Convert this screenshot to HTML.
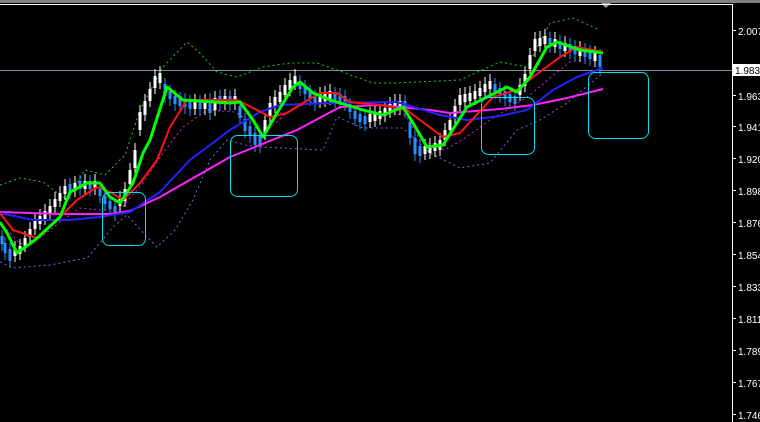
<!DOCTYPE html>
<html><head><meta charset="utf-8"><style>
html,body{margin:0;padding:0;background:#000;width:760px;height:422px;overflow:hidden}
svg{display:block}
text{font-family:"Liberation Sans",sans-serif;font-size:10px;fill:#fff}
</style></head><body>
<svg width="760" height="422" viewBox="0 0 760 422" xmlns="http://www.w3.org/2000/svg" xmlns:xlink="http://www.w3.org/1999/xlink">
<defs>
<path id="wb" d="M15 248v8M20 246v8M25 238v8M30 229v8M35 221v8M40 216v8M45 211v8M50 206v8M55 199v8M60 193v8M65 186v8M75 183v8M85 181v8M95 181v8M120 198v8M125 189v12M130 170v14M135 150v18M140 112v18M145 101v14M150 89v12M155 76v12M160 73v10M195 101v8M205 101v8M215 98v12M225 96v8M235 96v8M265 120v14M270 103v14M275 97v10M280 92v10M285 85v10M290 80v10M295 76v8M320 94v8M325 93v8M330 91v8M370 114v8M375 113v8M380 111v8M385 108v8M390 104v8M395 101v8M400 101v8M425 146v8M430 145v8M435 143v8M440 140v10M445 130v10M450 120v10M455 106v12M460 95v10M465 94v8M470 93v8M475 91v8M480 88v8M485 84v8M490 81v8M520 85v10M525 74v12M530 55v14M535 39v12M540 38v8M545 36v8M555 39v8M565 43v8M580 48v8M595 53v8"/>
<path id="bb" d="M2 236v8M5 243v10M10 249v12M70 184v8M80 181v8M90 181v8M100 188v8M105 196v8M110 201v8M115 206v8M165 84v12M170 91v8M175 96v8M180 98v8M185 99v8M190 101v8M200 101v8M210 99v14M220 96v8M230 96v8M240 106v12M245 119v12M250 126v10M255 133v12M260 136v10M300 81v8M305 86v8M310 91v8M315 96v8M335 93v8M340 94v8M345 96v8M350 104v8M355 111v8M360 114v8M365 116v8M405 101v10M410 122v16M415 138v16M420 146v10M495 84v8M500 88v8M505 91v8M510 94v8M515 96v8M550 38v8M560 41v8M570 44v8M575 46v8M585 49v8M590 51v8M600 55v12"/>
</defs>
<rect x="0" y="0" width="760" height="3" fill="#808080"/>
<polygon points="601,3 611,3 606,8" fill="#a0a0a0"/>
<line x1="0" y1="4.5" x2="732.5" y2="4.5" stroke="#fff"/>
<line x1="732.5" y1="4" x2="732.5" y2="422" stroke="#fff"/>
<line x1="0" y1="70.5" x2="732" y2="70.5" stroke="#8090a0"/>

<g fill="none" stroke-dasharray="2,3" stroke-width="1">
<polyline stroke="#22cc22" points="0,185 20,178 43,182 67,200 85,170 105,175 125,155 140,110 163,67 187,42 200,53 217,72 237,77 263,67 290,63 317,63 337,70 373,83 397,83 417,82 460,80 500,62 527,67 550,23 573,18 600,30"/>
<polyline stroke="#6a6ae0" points="0,262 13,268 50,265 87,258 100,243 113,227 127,215 147,237 157,247 175,230 193,200 210,160 227,140 245,145 263,147 323,150 337,117 363,128 403,128 430,153 460,168 490,163 517,130 540,120 567,103 603,73"/>
<polyline stroke="#cc22cc" points="0,222 20,244 40,238 60,222 80,208 100,210 120,210 143,183 163,153 183,127 207,110 235,112 255,125 270,128 290,110 310,102 340,102 370,112 405,115 420,140 445,150 465,138 490,120 510,108 530,95 550,78 570,62 603,55"/>
</g>

<g fill="none">
<use xlink:href="#wb" href="#wb" stroke="#fff" stroke-width="1" transform="translate(0,-7)"/>
<use xlink:href="#wb" href="#wb" stroke="#fff" stroke-width="1" transform="translate(0,6)"/>
<use xlink:href="#wb" href="#wb" stroke="#fff" stroke-width="3"/>
<use xlink:href="#bb" href="#bb" stroke="#2a8fff" stroke-width="1" transform="translate(0,-6)"/>
<use xlink:href="#bb" href="#bb" stroke="#2a8fff" stroke-width="1" transform="translate(0,7)"/>
<use xlink:href="#bb" href="#bb" stroke="#2a8fff" stroke-width="3"/>
</g>

<g fill="none" stroke-linejoin="round">
<polyline stroke="#ff22ff" stroke-width="2" points="0,212 60,214 110,214 130,211 160,197 230,157 297,130 340,107 380,105 400,107 430,110 450,113 500,109 533,105 567,98 603,89"/>
<polyline stroke="#2222ff" stroke-width="2" points="0,213 33,220 70,220 100,217 130,212 160,192 190,160 230,130 260,112 280,105 330,103 397,102 430,112 440,115 467,120 500,116 527,110 553,90 577,77 603,68"/>
<polyline stroke="#ff1111" stroke-width="2" points="0,213 13,230 37,238 60,217 77,200 97,187 110,192 123,200 140,183 157,160 170,127 187,100 213,100 237,100 257,110 270,117 287,113 303,103 320,93 337,93 350,102 380,105 407,110 420,120 443,137 460,133 493,97 517,90 533,77 560,57 577,47 603,52"/>
<polyline stroke="#00ff00" stroke-width="3" points="0,222 7,233 17,253 35,240 60,217 70,192 87,183 100,183 110,197 120,203 133,183 143,153 150,140 167,87 183,100 230,103 240,102 253,120 263,137 277,113 293,87 300,82 313,93 330,100 363,110 383,115 403,107 413,123 427,147 443,145 467,107 487,97 507,87 517,92 530,77 547,47 557,42 580,50 603,53"/>
</g>

<g fill="none" stroke="#00e0f0">
<rect x="102.5" y="192.5" width="43" height="53" rx="7"/>
<rect x="230.5" y="135.5" width="67" height="61" rx="7"/>
<rect x="481.5" y="97.5" width="53" height="57" rx="7"/>
<rect x="588.5" y="72.5" width="60" height="66" rx="7"/>
</g>

<g stroke="#fff">
<line x1="733" x2="736" y1="30.5" y2="30.5"/><line x1="733" x2="736" y1="95.5" y2="95.5"/><line x1="733" x2="736" y1="126.5" y2="126.5"/><line x1="733" x2="736" y1="158.5" y2="158.5"/><line x1="733" x2="736" y1="190.5" y2="190.5"/><line x1="733" x2="736" y1="222.5" y2="222.5"/><line x1="733" x2="736" y1="254.5" y2="254.5"/><line x1="733" x2="736" y1="286.5" y2="286.5"/><line x1="733" x2="736" y1="318.5" y2="318.5"/><line x1="733" x2="736" y1="350.5" y2="350.5"/><line x1="733" x2="736" y1="382.5" y2="382.5"/><line x1="733" x2="736" y1="414.5" y2="414.5"/>
</g>
<text x="738" y="35">2.007</text><text x="738" y="100">1.963</text><text x="738" y="131">1.941</text><text x="738" y="163">1.920</text><text x="738" y="195">1.898</text><text x="738" y="227">1.876</text><text x="738" y="259">1.854</text><text x="738" y="291">1.833</text><text x="738" y="323">1.811</text><text x="738" y="355">1.789</text><text x="738" y="387">1.767</text><text x="738" y="419">1.746</text>
<rect x="733" y="64" width="27" height="12" fill="#fff"/>
<text x="735" y="74" style="fill:#000">1.983</text>
</svg>
</body></html>
